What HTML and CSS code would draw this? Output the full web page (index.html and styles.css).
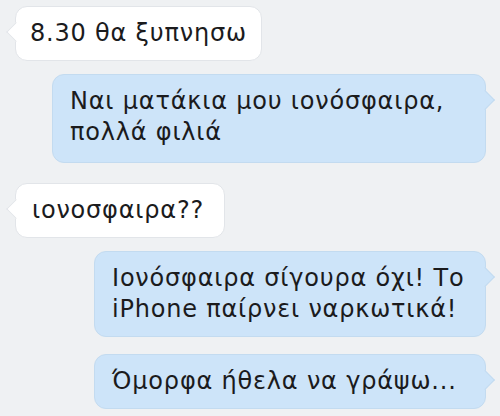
FILE: index.html
```html
<!DOCTYPE html>
<html lang="el">
<head>
  <meta charset="UTF-8" />
  <meta name="viewport" content="width=device-width, initial-scale=1" />
  <title>Messages</title>
  <link rel="stylesheet" href="styles.css">
</head>
<body>
  <div class="chat">
    <div class="msg in">8.30 θα ξυπνησω</div>
    <div class="msg out wide">Ναι ματάκια μου ιονόσφαιρα, πολλά φιλιά</div>
    <div class="msg in apart">ιονοσφαιρα??</div>
    <div class="msg out">Ιονόσφαιρα σίγουρα όχι! Το iPhone παίρνει ναρκωτικά!</div>
    <div class="msg out last">Όμορφα ήθελα να γράψω...</div>
  </div>
</body>
</html>
```

FILE: styles.css
```css
body {
  margin: 0;
  background: #eff1f3;
  font-family: "DejaVu Sans", "Liberation Sans", sans-serif;
  color: #1b1b1d;
}
.chat {
  display: flex;
  flex-direction: column;
  gap: 13px;
  padding: 6px 14px 6px 15px;
}
.msg {
  position: relative;
  font-size: 24px;
  letter-spacing: 0.8px;
  line-height: 31px;
  padding: 11px 14px;
  border-radius: 12px;
  border: 1px solid #e2e5e9;
}
.msg::before {
  content: "";
  position: absolute;
  top: 18px;
  width: 13px;
  height: 13px;
  transform: rotate(45deg);
}
.in {
  align-self: flex-start;
  background: #fff;
}
.in::before {
  left: -7px;
  background: #fff;
  border-left: 1px solid #e2e5e9;
  border-bottom: 1px solid #e2e5e9;
}
.in.apart {
  margin-top: 7px;
  padding-left: 16px;
  padding-right: 20px;
}
.out {
  align-self: flex-end;
  width: 392px;
  box-sizing: border-box;
  padding-left: 17px;
  background: #cde4f9;
  border-color: #c3dbf0;
}
.out::before {
  right: -7px;
  background: #cde4f9;
  border-top: 1px solid #c3dbf0;
  border-right: 1px solid #c3dbf0;
}
.out.wide {
  width: 434px;
  padding-bottom: 14px;
}
.last {
  margin-top: 4px;
}
```
